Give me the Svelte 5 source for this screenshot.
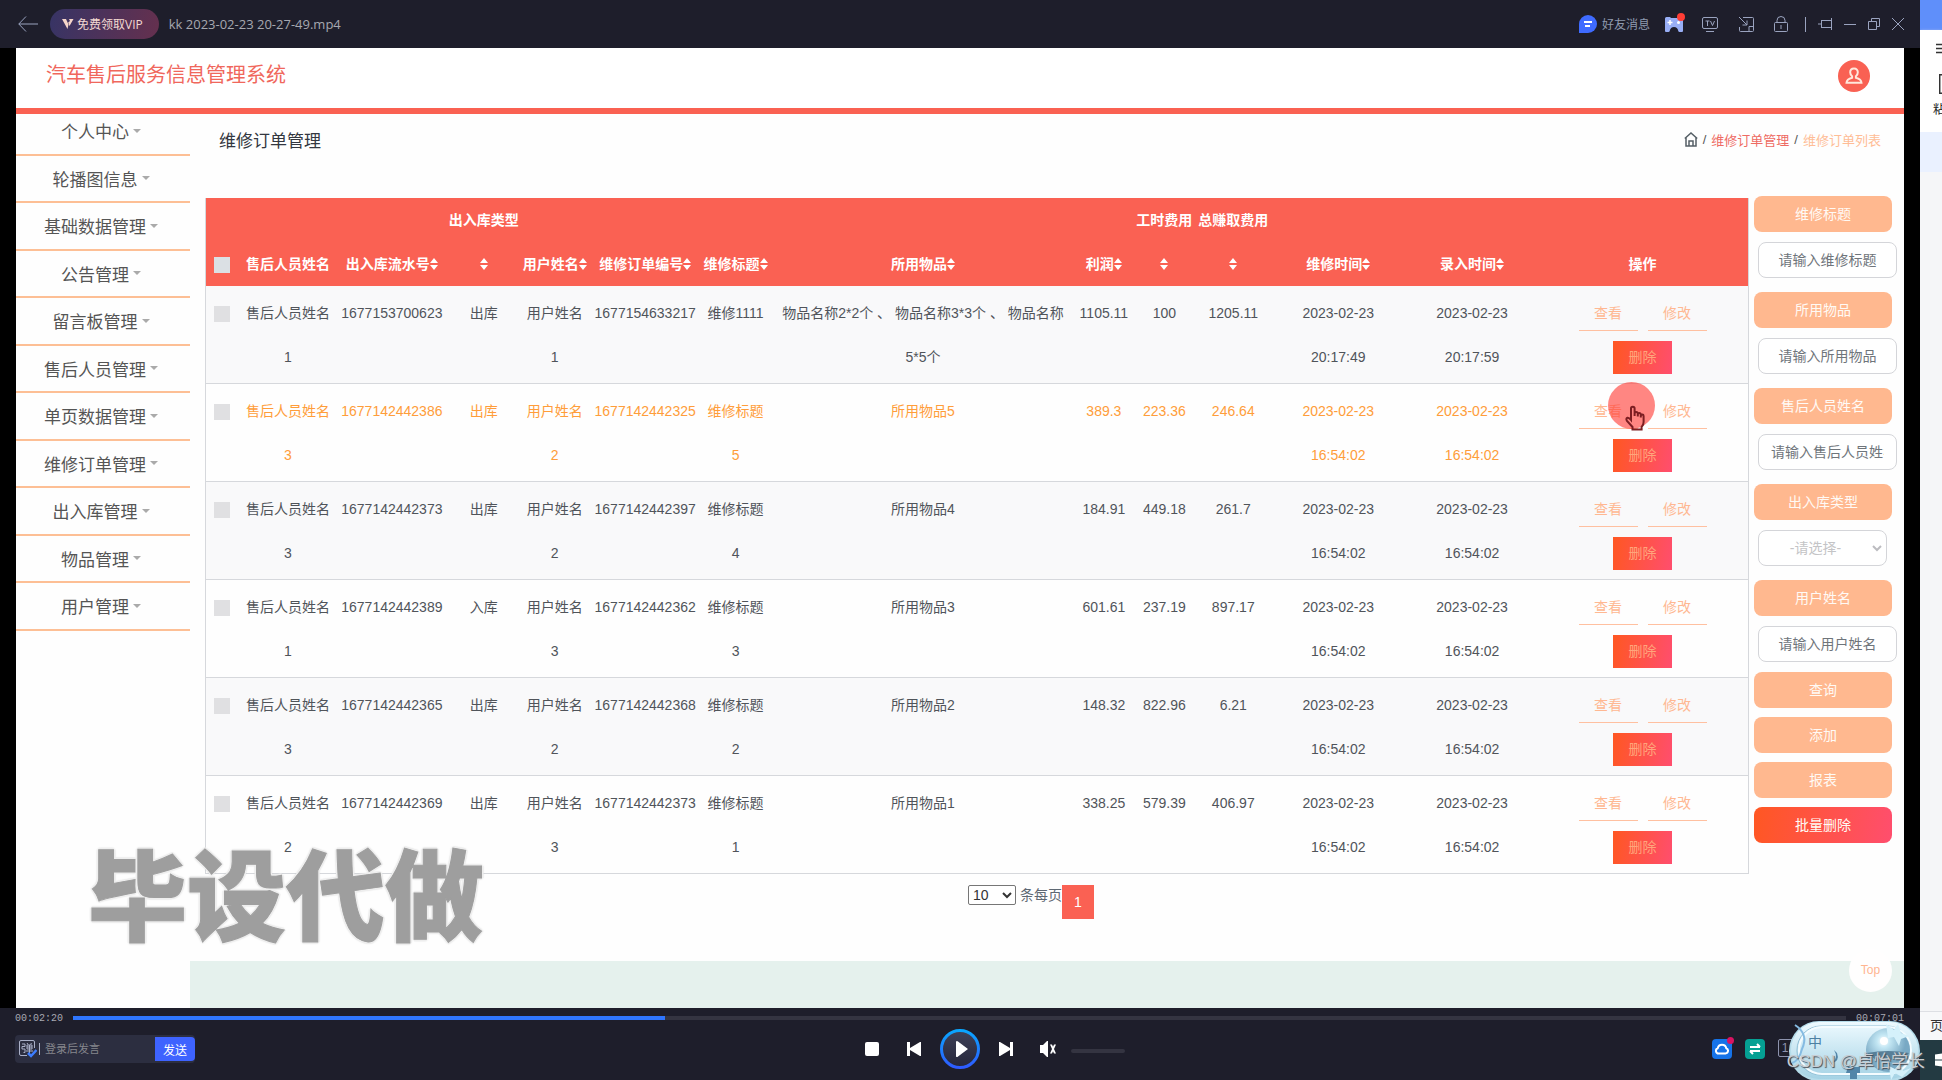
<script>
  const menu = ['个人中心', '轮播图信息', '基础数据管理', '公告管理', '留言板管理', '售后人员管理', '单页数据管理', '维修订单管理', '出入库管理', '物品管理', '用户管理'];

  const columns = [
    { label: '', width: 33 },
    { label: '售后人员姓名', width: 98 },
    { label: '出入库流水号', width: 110, sort: true },
    { label: '出入库类型', width: 74, sort: true, wrap: true },
    { label: '用户姓名', width: 68, sort: true },
    { label: '维修订单编号', width: 113, sort: true },
    { label: '维修标题', width: 68, sort: true },
    { label: '所用物品', width: 307, sort: true },
    { label: '利润', width: 55, sort: true },
    { label: '工时费用', width: 66, sort: true, wrap: true },
    { label: '总赚取费用', width: 72, sort: true, wrap: true },
    { label: '维修时间', width: 138, sort: true },
    { label: '录入时间', width: 130, sort: true },
    { label: '操作', width: 211 }
  ];
  const total = columns.reduce((sum, c) => sum + c.width, 0);

  const rows = [
    ['售后人员姓名\n1', '1677153700623', '出库', '用户姓名\n1', '1677154633217', '维修1111', '物品名称2*2个 、 物品名称3*3个 、 物品名称\n5*5个', '1105.11', '100', '1205.11', '2023-02-23\n20:17:49', '2023-02-23\n20:17:59'],
    ['售后人员姓名\n3', '1677142442386', '出库', '用户姓名\n2', '1677142442325', '维修标题\n5', '所用物品5', '389.3', '223.36', '246.64', '2023-02-23\n16:54:02', '2023-02-23\n16:54:02'],
    ['售后人员姓名\n3', '1677142442373', '出库', '用户姓名\n2', '1677142442397', '维修标题\n4', '所用物品4', '184.91', '449.18', '261.7', '2023-02-23\n16:54:02', '2023-02-23\n16:54:02'],
    ['售后人员姓名\n1', '1677142442389', '入库', '用户姓名\n3', '1677142442362', '维修标题\n3', '所用物品3', '601.61', '237.19', '897.17', '2023-02-23\n16:54:02', '2023-02-23\n16:54:02'],
    ['售后人员姓名\n3', '1677142442365', '出库', '用户姓名\n2', '1677142442368', '维修标题\n2', '所用物品2', '148.32', '822.96', '6.21', '2023-02-23\n16:54:02', '2023-02-23\n16:54:02'],
    ['售后人员姓名\n2', '1677142442369', '出库', '用户姓名\n3', '1677142442373', '维修标题\n1', '所用物品1', '338.25', '579.39', '406.97', '2023-02-23\n16:54:02', '2023-02-23\n16:54:02']
  ];
  const hovered = 1;

  const filters = [
    { id: 'f-title', label: '维修标题', hint: '请输入维修标题' },
    { id: 'f-goods', label: '所用物品', hint: '请输入所用物品' },
    { id: 'f-staff', label: '售后人员姓名', hint: '请输入售后人员姓名' },
    { id: 'f-type', label: '出入库类型', select: true },
    { id: 'f-user', label: '用户姓名', hint: '请输入用户姓名' }
  ];

  const played = 33.37;
</script>

<div class="desktop">
  <div class="player">
    <header class="titlebar">
      <button class="icon back" aria-label="返回">
        <svg width="20" height="16" viewBox="0 0 20 16"><path d="M8 .5 .8 8 8 15.500M.8 8H20" /></svg>
      </button>
      <button class="vip">
        <svg width="12" height="12" viewBox="0 0 12 12"><path d="M0 1h4l2.500 5.500L5.500 11zM7 1h4.500L7.500 8 6.200 4.500 8 3z" /></svg>免费领取VIP
      </button>
      <span class="file">kk 2023-02-23 20-27-49.mp4</span>
      <nav class="tools">
        <button class="friends">
          <svg width="18" height="18" viewBox="0 0 18 18"><path d="M9 0a9 9 0 1 1 0 18H0V9a9 9 0 0 1 9-9z" fill="#3f6bff" /><path d="M5 7h8M6 11h5" stroke="#fff" stroke-width="2" /></svg>好友消息
        </button>
        <button class="icon game" aria-label="游戏">
          <svg width="20" height="20" viewBox="0 0 20 20"><path d="M0 5.500Q0 4 1.500 4H5l1 1h6l1-1h3.500Q18 4 18 5.500V18q0 1-1 1h-2.500q-1 0-1.200-1-.8-4-4.300-4t-4.300 4q-.2 1-1.200 1H1q-1 0-1-1z" fill="#98aef5" /><path d="M2.500 9.500h5M5 7v5" stroke="#fff" stroke-width="1.500" /><circle cx="13.500" cy="9.500" r="1.500" fill="#fff" /><circle cx="16" cy="4" r="4" fill="#ff3d35" /></svg>
        </button>
        <button class="icon" aria-label="投屏">
          <svg width="16" height="16" viewBox="0 0 16 16"><rect x=".5" y="1.500" width="15" height="11" rx="1.500" /><path d="M4 15.500h8M3.500 5h4M5.500 5v5M8.500 5l2 4.500 2-4.500" /></svg>
        </button>
        <button class="icon" aria-label="小窗">
          <svg width="16" height="16" viewBox="0 0 16 16"><path d="M5 1.500h9.500q1 0 1 1v12q0 1-1 1h-12q-1 0-1-1V11M1 1l8 8M9 4.500V9H4.500M15.500 10.500H11v5" /></svg>
        </button>
        <button class="icon" aria-label="锁定">
          <svg width="14" height="16" viewBox="0 0 14 16"><rect x=".5" y="6.500" width="13" height="9" rx="1" /><path d="M3 6.500V4.500a4 4 0 0 1 8 0v2M7 9v4" /></svg>
        </button>
        <i class="sep"></i>
        <button class="icon pin" aria-label="置顶">
          <svg width="14" height="14" viewBox="0 0 14 14"><path d="M0 7h4M3.500 3v8M3.500 3.500h10M3.500 10.500h10M13.500 1v12" /></svg>
        </button>
        <button class="icon min" aria-label="最小化">
          <svg width="12" height="12" viewBox="0 0 12 12"><path d="M0 6.500h12" /></svg>
        </button>
        <button class="icon" aria-label="还原">
          <svg width="12" height="12" viewBox="0 0 12 12"><path d="M.5 3.500h8v8h-8zM3.500 3.500v-3h8v8h-3" /></svg>
        </button>
        <button class="icon" aria-label="关闭">
          <svg width="12" height="12" viewBox="0 0 12 12"><path d="M0 0l12 12M12 0 0 12" /></svg>
        </button>
      </nav>
    </header>

    <div class="video">
      <div class="site">
        <header class="brand">
          <h1>汽车售后服务信息管理系统</h1>
          <button class="avatar" aria-label="用户">
            <svg width="18" height="18" viewBox="0 0 18 18"><path d="M9 1.500c-2.500 0-3.800 1.600-3.800 3.800 0 1.700.8 3.200 1.900 4v1.400c-3.200.8-5.400 2.300-5.600 5h15c-.2-2.700-2.400-4.200-5.600-5V9.300c1.100-.8 1.900-2.300 1.900-4 0-2.200-1.300-3.800-3.800-3.800z" /></svg>
          </button>
        </header>
        <div class="body">
          <ul class="menu">
            {#each menu as item}
              <li><a href="#menu">{item}<i class="caret"></i></a></li>
            {/each}
          </ul>
          <main>
            <div class="head">
              <h2>维修订单管理</h2>
              <nav class="crumbs">
                <svg width="14" height="15" viewBox="0 0 14 15"><path d="M.8 6.500 7 1l6.200 5.500M2 5.500V14h10V5.500M5 14V9h4v5" /></svg>
                <span>/</span><a href="#orders">维修订单管理</a><span>/</span><em>维修订单列表</em>
              </nav>
            </div>
            <div class="split">
              <div class="list">
                <table>
                  <colgroup>
                    {#each columns as c}<col style="width: {(c.width / total) * 100}%" />{/each}
                  </colgroup>
                  <thead>
                    <tr>
                      {#each columns as c, i}
                        <th>
                          {#if i === 0}<input type="checkbox" aria-label="全选" />{:else}{c.label}{#if c.wrap}<br />{/if}{#if c.sort}<svg class="sort" width="8" height="12" viewBox="0 0 8 12"><path d="M4 0l4 5H0zM4 12l4-5H0z" /></svg>{/if}{/if}
                        </th>
                      {/each}
                    </tr>
                  </thead>
                  <tbody>
                    {#each rows as row, r}
                      <tr class:hot={r === hovered}>
                        <td><input type="checkbox" aria-label="选择第{r + 1}行" /></td>
                        {#each row as cell}<td>{cell}</td>{/each}
                        <td class="ops">
                          <div>
                            <button>查看</button><button>修改</button><button class="del">删除</button>
                            {#if r === hovered}
                              <span class="pointer">
                                <svg width="20" height="26" viewBox="0 0 20 26"><path d="M6 15V3.500a1.800 1.800 0 0 1 3.600 0V11V8.500a1.600 1.600 0 0 1 3.200 0V11.500V9.500a1.500 1.500 0 0 1 3 0V12.500V11a1.400 1.400 0 0 1 2.800 0v6q0 3-2 5v2.500H7.500V22L2 16q-1.500-2.500.5-3.200Q4 12.500 6 15z" /></svg>
                              </span>
                            {/if}
                          </div>
                        </td>
                      </tr>
                    {/each}
                  </tbody>
                </table>
                <div class="pager">
                  <label><select><option>10</option></select> 条每页</label><button>1</button>
                </div>
              </div>
              <aside>
                {#each filters as f}
                  <div class="field">
                    <label for={f.id}>{f.label}</label>
                    {#if f.select}
                      <div class="pick">
                        <select id={f.id}><option>-请选择-</option></select>
                        <svg width="10" height="7" viewBox="0 0 10 7"><path d="M1 1l4 4 4-4" /></svg>
                      </div>
                    {:else}
                      <input id={f.id} type="text" placeholder={f.hint} />
                    {/if}
                  </div>
                {/each}
                <div class="acts">
                  <button>查询</button>
                  <button>添加</button>
                  <button>报表</button>
                  <button class="danger">批量删除</button>
                </div>
              </aside>
            </div>
            <footer><a class="top" href="#top">Top</a></footer>
          </main>
        </div>
        <div class="stamp">毕设代做</div>
      </div>
    </div>

    <div class="controls">
      <div class="seek">
        <time>00:02:20</time>
        <div class="track"><div class="done" style="width: {played}%"></div></div>
        <time>00:07:01</time>
      </div>
      <div class="deck">
        <div class="chat">
          <svg width="18" height="18" viewBox="0 0 18 18"><path d="M8 15.500H2q-1.500 0-1.500-1.500V2Q.5.5 2 .5h12q1.500 0 1.500 1.500v6M3 4h3v2.500H3V9h3v3.500H4.500M8 3l1 1.500M12.500 3l-1 1.500M8 5h5v4H8zM8 7h5M7 11h7M10.500 5v8" fill="none" stroke="#aab0c8" /><path d="M9 13l3 3 5.500-6" fill="none" stroke="#3d7dff" stroke-width="2.500" /></svg>
          <i></i>
          <input type="text" placeholder="登录后发言" aria-label="弹幕" />
          <button>发送</button>
        </div>
        <div class="keys">
          <button aria-label="停止"><svg width="14" height="14" viewBox="0 0 14 14"><rect width="14" height="14" rx="2" /></svg></button>
          <button aria-label="上一个"><svg width="14" height="14" viewBox="0 0 14 14"><path d="M0 0h3v6L13 0h1v14h-1L3 8v6H0z" /></svg></button>
          <button class="play" aria-label="播放">
            <svg width="40" height="40" viewBox="0 0 40 40">
              <defs>
                <linearGradient id="ring" x1="0" y1="0" x2="0" y2="1"><stop offset="0" stop-color="#0aa6ff" /><stop offset="1" stop-color="#2e5bff" /></linearGradient>
                <linearGradient id="disc" x1="0" y1="0" x2="0" y2="1"><stop offset="0" stop-color="#3f4158" /><stop offset="1" stop-color="#25263a" /></linearGradient>
              </defs>
              <circle cx="20" cy="20" r="18.500" fill="url(#disc)" stroke="url(#ring)" stroke-width="3" /><path d="M16 12.500q1-1 2 0L28 20 18 27.500q-1 1-2 0z" />
            </svg>
          </button>
          <button aria-label="下一个"><svg width="14" height="14" viewBox="0 0 14 14"><path d="M14 0h-3v6L1 0H0v14h1l10-6v6h3z" /></svg></button>
          <button class="mute" aria-label="静音"><svg width="16" height="16" viewBox="0 0 16 16"><path d="M0 4h3l4-4h1v16H7l-4-4H0z" /><path d="M10 3.500h2l4 9h-2zM14 3.500h2l-4 9h-2z" /></svg></button>
          <input class="volume" type="range" min="0" max="100" value="0" aria-label="音量" />
        </div>
        <div class="extras">
          <button class="tile cloud" aria-label="网盘"><svg width="14" height="12" viewBox="0 0 14 12"><path d="M4 10.500h6.500a2.700 2.700 0 0 0 .8-5.200 4.400 4.400 0 0 0-8.600 0A2.700 2.700 0 0 0 4 10.500z" /></svg><b></b></button>
          <button class="tile swap" aria-label="切换"><svg width="12" height="12" viewBox="0 0 12 12"><path d="M1 4h10M8 1l3 3M11 8H1M4 11 1 8" /></svg></button>
          <button class="speed">1.0</button>
        </div>
      </div>
      <div class="ime">
        <span>中</span>
        <svg viewBox="0 0 131 59">
          <defs>
            <linearGradient id="shell" x1="0" y1="0" x2="0" y2="1"><stop offset="0" stop-color="#eefaff" /><stop offset="1" stop-color="#a5d3e5" /></linearGradient>
            <radialGradient id="orb" cx=".4" cy=".3"><stop offset="0" stop-color="#fff" /><stop offset=".3" stop-color="#c2e6f3" /><stop offset="1" stop-color="#79a9c4" /></radialGradient>
          </defs>
          <rect width="131" height="60" rx="30" fill="#b5dcea" />
          <rect x="2" y="1" width="127" height="57" rx="28" fill="url(#shell)" />
          <rect x="8" y="5" width="114" height="49" rx="24" fill="none" stroke="#90bfd5" />
          <rect x="10" y="6" width="112" height="47" rx="23" fill="none" stroke="#f4fcff" stroke-width="2" />
          <circle cx="99" cy="29" r="22" fill="url(#orb)" />
          <path d="M78 32q21-4 42 0l-5 6-8-3-6 5-8-4-6 3z" fill="#587f98" />
          <path d="M97 3l8 6 4-6 3 9 8 3-8 3-2 7-5-9-6 1zM100 45l6 3 5-6 3 8 8-3-9 9-7-4-4 7z" fill="#d5f1fb" />
          <path d="M6 4q14 9 7 24Q10 40 3 42" fill="none" stroke="#85bbe2" stroke-width="2" />
          <path d="M45 29q5 8-2 13 8-2 5-10zM59 46h12v6h-3v6h-7v-6h-4z" fill="#5286a9" />
          <circle cx="95" cy="20" r="4" fill="#fff" />
        </svg>
      </div>
    </div>
    <div class="credit">CSDN @卓怡学长</div>
  </div>

  <div class="behind">
    <div class="b-title"></div>
    <div class="b-ribbon">
      <svg width="6" height="12" viewBox="0 0 6 12"><path d="M0 1.500h6M0 5.500h6M0 9.500h6" /></svg>
      <svg width="3" height="20" viewBox="0 0 3 20"><path d="M3 .7H.7v18.600H3" /></svg>
      <span>粘贴</span>
    </div>
    <div class="b-tab"></div>
    <div class="b-doc"></div>
    <div class="b-status">页面</div>
    <div class="b-task"><svg width="7" height="14" viewBox="0 0 7 14"><path d="M0 1.500 7 .5v6H0zM0 7.500h7v6L0 12.500z" /></svg></div>
  </div>
</div>

<style>
  :global(body) { margin: 0; }
  * { box-sizing: border-box; }
  .desktop { display: flex; min-height: 100vh; font-family: 'Liberation Sans', 'Noto Sans CJK SC', sans-serif; font-size: 14px; overflow: hidden; }
  button { border: 0; padding: 0; background: none; font: inherit; color: inherit; }
  input, select { font: inherit; }
  a { text-decoration: none; color: inherit; }
  svg { display: block; flex: none; }
  h1, h2, ul { margin: 0; padding: 0; font-weight: 400; list-style: none; }

  .player { position: relative; flex: 1; min-width: 0; display: flex; flex-direction: column; background: #1e1e2b; }
  .titlebar { display: flex; align-items: center; height: 48px; padding: 0 16px 0 18px; color: #9699a8; font-family: 'Open Sans', 'Noto Sans CJK SC', sans-serif; font-size: 12px; }
  .icon svg { fill: none; stroke: #9aa3bf; }
  .vip { display: flex; align-items: center; gap: 3px; height: 30px; margin: 0 10px 0 12px; padding: 0 16px 0 12px; border-radius: 15px; background: linear-gradient(100deg, #373465, #65304e); color: #f3d9d2; }
  .vip svg { fill: #f6d5c9; }
  .file { font-size: 13px; color: #a6a8b0; }
  .tools { display: flex; align-items: center; margin-left: auto; gap: 20px; }
  .friends { display: flex; align-items: center; gap: 5px; margin-right: -5px; color: #8f9bb0; }
  .game { margin-right: -3px; }
  .game svg { stroke: none; margin-bottom: 2px; }
  .sep { width: 1px; height: 15px; margin: 0 -8px 0 -3px; background: #9aa3bf; }
  .pin, .min { margin-right: -8px; }
  .min + .icon { margin-right: -8px; }

  .video { flex: 1; display: flex; padding: 0 16px; background: #000; }
  .site { position: relative; flex: 1; min-width: 0; display: flex; flex-direction: column; background: #fefefe; }
  .brand { display: flex; align-items: center; justify-content: space-between; height: 66px; padding: 0 34px 4px 30px; border-bottom: 6px solid #fa6152; background: #fff; }
  h1 { font-size: 20px; line-height: 28px; padding-bottom: 2px; color: #f0675c; }
  .avatar { display: grid; place-items: center; width: 32px; height: 32px; border-radius: 50%; background: #f96153; }
  .avatar svg { fill: none; stroke: #ffe8dc; stroke-width: 2; }
  .body { flex: 1; display: flex; }
  .menu { width: 174px; flex: none; }
  li { height: 48px; border-bottom: 2px solid #fdbf95; }
  li:nth-child(even) { height: 47px; }
  li:first-child { height: 42px; }
  li a { display: flex; align-items: center; justify-content: center; gap: 4px; height: 100%; padding: 0 4px 1px 0; font-size: 17px; color: #555; }
  li:first-child a { padding-bottom: 7px; }
  .caret { border: 4px solid transparent; border-top-color: #aaa; border-bottom: 0; }

  main { flex: 1; min-width: 0; display: flex; flex-direction: column; }
  .head { display: flex; align-items: center; justify-content: space-between; height: 82px; padding: 0 23px 32px 29px; }
  h2 { font-size: 17px; color: #333740; }
  .crumbs { display: flex; align-items: center; gap: 5px; font-size: 13px; color: #555; }
  .crumbs svg { fill: none; stroke: #555f66; stroke-width: 1.500; }
  .crumbs a { color: #ee6b63; }
  .crumbs em { font-style: normal; color: #ffbd96; }

  .split { display: flex; gap: 5px; padding-left: 15px; }
  .list { flex: 1; min-width: 0; padding-top: 2px; }
  table { width: 100%; table-layout: fixed; border-spacing: 0; border: 1px solid #d6d8dc; border-top: 0; border-bottom: 0; line-height: 44px; text-align: center; color: #50545a; }
  th, td { padding: 0; white-space: pre-line; }
  th { height: 88px; vertical-align: bottom; white-space: nowrap; background: #fa6153; color: #fff; line-height: 44px; }
  td { height: 98px; padding: 5px 0 4px; vertical-align: top; border-bottom: 1px solid #d6d8dc; }
  tbody tr:nth-child(odd) { background: #f9f9fa; }
  .hot { color: #ff9d3a; }
  .sort { display: inline-block; vertical-align: -1px; fill: #fff; }
  input[type='checkbox'] { appearance: none; width: 16px; height: 16px; margin: 0; vertical-align: middle; background: #e0e0e2; }
  th input[type='checkbox'] { background: #dbe0e4; }
  td.ops { padding: 12px 0 0; line-height: 20px; white-space: normal; }
  .ops div { position: relative; display: flex; flex-wrap: wrap; justify-content: center; gap: 10px; width: 140px; margin: 0 auto; }
  .ops button { width: 59px; height: 33px; padding-bottom: 2px; border-bottom: 1px solid #ffc0a0; color: #ffb892; }
  .ops .del { border: 0; background: linear-gradient(100deg, #ff5722, #ff4e6e); color: #ffa57c; }
  .pointer { position: absolute; left: 35px; top: -14px; width: 47px; height: 47px; padding: 23px 0 0 17px; border-radius: 50%; background: rgba(255, 60, 54, 0.62); }
  .pointer svg { fill: none; stroke: #7c1e22; stroke-width: 2; }

  .pager { display: flex; justify-content: center; height: 87px; padding: 11px 0 0 108px; color: #5e6873; }
  .pager label { line-height: 20px; }
  .pager select { width: 48px; height: 20px; padding: 0; border: 1px solid #767676; border-radius: 2px; background: #fff; color: #333; }
  .pager button { width: 32px; height: 34px; background: #fa6153; color: #fff; }

  aside { width: 150px; flex: none; }
  .field { margin-bottom: 14px; }
  .field:nth-child(5) { margin-bottom: 10px; }
  .field label { display: block; width: 138px; margin-bottom: 10px; border-radius: 8px; background: #ffb88f; color: #fffaf5; text-align: center; line-height: 36px; }
  .field input, .field select { display: block; width: 139px; height: 36px; margin-left: 4px; padding: 0 12px; border: 1px solid #d4d5d9; border-radius: 8px; background: #fff; text-align: center; }
  .field input::placeholder { color: #6f757b; }
  .pick { position: relative; width: 134px; }
  .field select { appearance: none; width: 129px; padding: 0 26px 0 12px; color: #c4c4c6; text-align-last: center; }
  .pick svg { position: absolute; right: 6px; top: 15px; fill: none; stroke: #bcbcc0; stroke-width: 2; }
  .acts { display: flex; flex-direction: column; gap: 9px; width: 138px; }
  .acts button { height: 36px; padding-bottom: 2px; border-radius: 8px; background: #ffb88f; color: #fffaf5; }
  .acts .danger { background: linear-gradient(100deg, #ff5722, #ff4e6e); }

  footer { position: relative; flex: 1; min-height: 46px; background: #e5f1ed; }
  .top { position: absolute; right: 12px; top: -12px; width: 43px; height: 43px; border-radius: 50%; background: #fffefe; color: #ffb590; font-size: 12px; line-height: 43px; text-align: center; }
  .stamp { position: absolute; left: 72px; bottom: 65px; font-family: 'Noto Sans CJK SC', sans-serif; font-size: 99px; font-weight: 900; line-height: 106px; color: #9e9e9e; -webkit-text-stroke: 1px #9e9e9e; text-shadow: 2px 0 #eee, -2px 0 #eee, 0 2px #eee, 0 -2px #eee, 0 0 3px #888; }

  .controls { position: relative; height: 72px; }
  .seek { display: flex; align-items: center; gap: 10px; height: 20px; padding: 0 16px 0 15px; font-family: 'Liberation Mono', monospace; font-size: 10px; color: #a8a9b2; }
  .track { flex: 1; height: 4px; background: #343441; }
  .done { height: 100%; background: #2f76ff; }
  .deck { display: grid; grid-template-columns: 1fr auto 1fr; align-items: center; height: 42px; padding: 0 130px 0 15px; font-size: 12px; }
  .chat { display: flex; align-items: center; width: 180px; height: 28px; padding-left: 4px; border-radius: 4px; background: #2c2e40; }
  .chat i { width: 1px; height: 12px; margin: 0 5px 0 2px; background: #aab0c8; }
  .chat input { flex: 1; min-width: 0; padding: 0; border: 0; background: none; font-size: 11px; }
  .chat input::placeholder { color: #85868c; }
  .chat button { width: 40px; height: 24px; border-radius: 0 4px 4px 0; background: #3e63ff; color: #fff; }
  .keys { display: flex; align-items: center; margin-left: 185px; }
  .keys svg { fill: #fff; }
  .keys button + button { margin-left: 28px; }
  .keys button.play { margin: 0 -9px 0 19px; }
  .keys button.mute { margin-left: 27px; }
  .volume { appearance: none; width: 54px; height: 4px; margin: 4px 0 0 15px; border-radius: 2px; background: #343441; }
  .volume::-webkit-slider-thumb { appearance: none; width: 0; height: 0; }
  .extras { display: flex; justify-content: flex-end; gap: 13px; }
  .tile { position: relative; display: grid; place-items: center; width: 20px; height: 20px; border-radius: 4px; background: #1673e8; }
  .tile svg { fill: none; stroke: #fff; stroke-width: 2; }
  .tile b { position: absolute; right: -2px; top: -2px; width: 7px; height: 7px; border-radius: 50%; background: #d91362; }
  .swap { background: #05a093; }
  .speed { width: 24px; height: 18px; margin-right: -12px; border: 1px solid #8d93ad; border-radius: 2px; color: #8d93ad; }
  .ime { position: absolute; right: 0; bottom: 0; width: 131px; height: 59px; }
  .ime span { position: absolute; left: 19px; top: 11px; font-size: 14px; line-height: 20px; color: #4c80a2; }
  .credit { position: absolute; right: -5px; bottom: 6px; z-index: 2; font-size: 17px; line-height: 24px; white-space: nowrap; color: #c9ced3; text-shadow: 1px 1px 1px #454b52; }

  .behind { width: 22px; flex: none; display: flex; flex-direction: column; overflow: hidden; background: #f5f6f8; }
  .b-title { height: 30px; background: #5f8ffa; }
  .b-ribbon { display: flex; flex-direction: column; align-items: flex-end; height: 102px; padding-top: 13px; gap: 19px; background: #fff; box-shadow: 0 1px 3px #ccd4e4; }
  .b-ribbon svg { fill: none; stroke: #333; stroke-width: 1.500; }
  .b-ribbon span { align-self: flex-start; margin: -13px 0 0 13px; font-size: 12px; line-height: 20px; white-space: nowrap; color: #222; }
  .b-tab { height: 40px; background: #eaf1ff; }
  .b-doc { flex: 1; }
  .b-status { height: 29px; padding-left: 10px; border-top: 1px solid #dddfe4; background: #f7f8fa; font-size: 13px; line-height: 28px; white-space: nowrap; overflow: hidden; color: #333; }
  .b-task { display: flex; justify-content: flex-end; height: 40px; padding-top: 13px; background: #233a42; }
  .b-task svg { fill: #fff; }
</style>
